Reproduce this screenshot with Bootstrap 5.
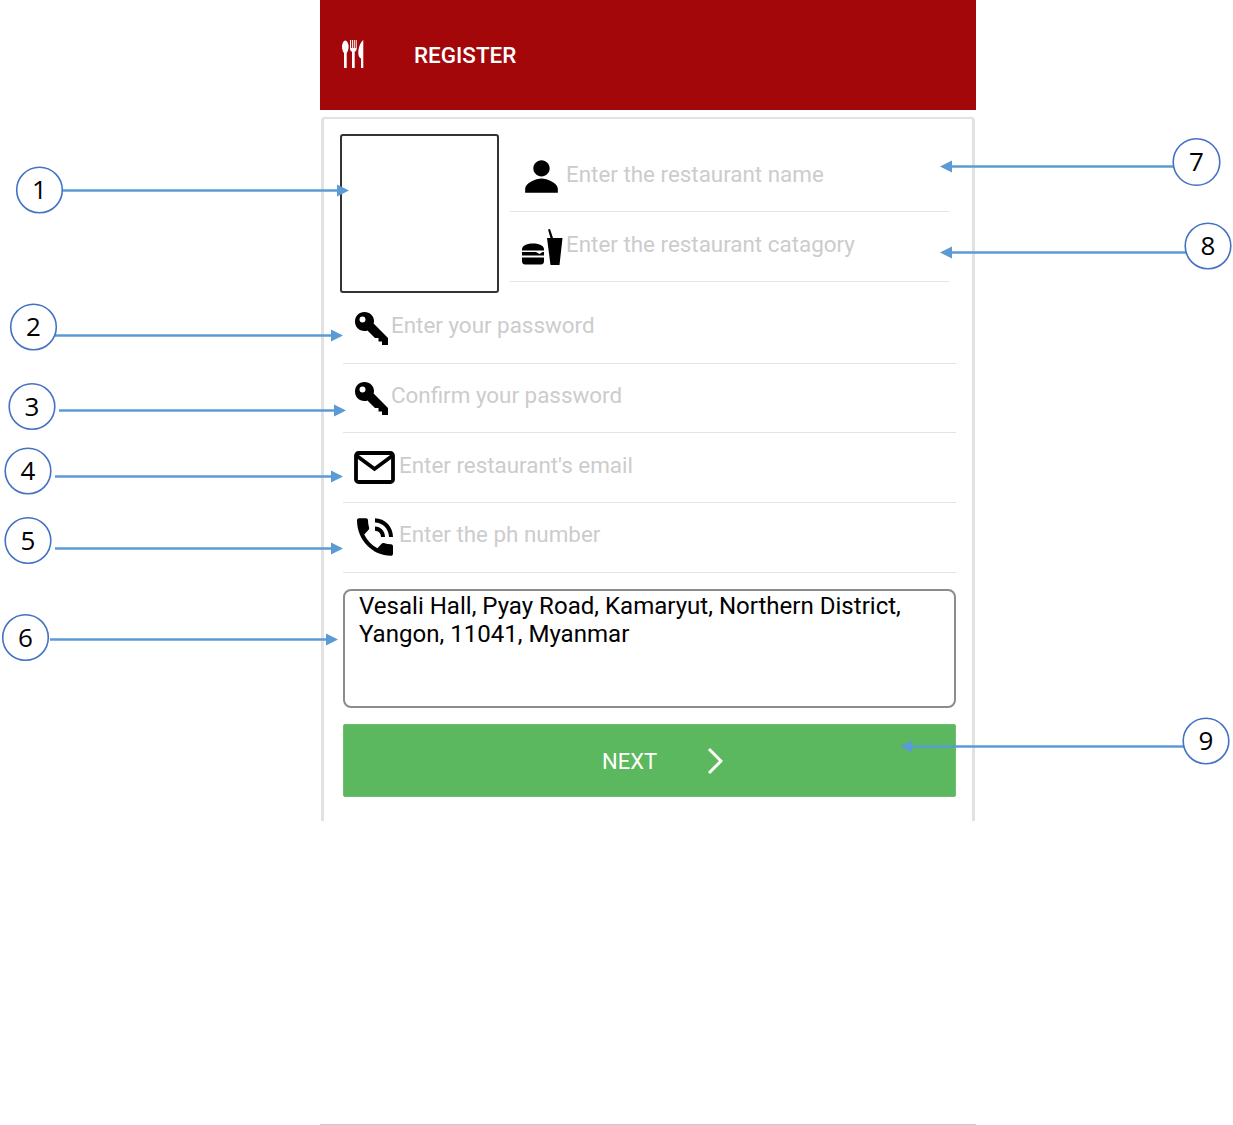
<!DOCTYPE html>
<html lang="en">
<head>
  <meta charset="UTF-8">
  <meta name="viewport" content="width=device-width, initial-scale=1.0">
  <title>Register</title>
  <link href="https://cdn.jsdelivr.net/npm/bootstrap@5.3.7/dist/css/bootstrap.min.css" rel="stylesheet">
  <script src="https://cdn.jsdelivr.net/npm/bootstrap@5.3.7/dist/js/bootstrap.bundle.min.js"></script>
  <style>
    body { background: #fff; font-family: Roboto, "Liberation Sans", sans-serif; }
    .page-canvas { width: 1233px; height: 1125px; overflow: hidden; }
    .phone-frame { width: 656px; height: 1125px; margin-left: 320px; border-bottom: 1px solid #ccc; }
    .app-bar { height: 110px; background: #a30709; color: #fff; padding-left: 21px; }
    .bar-icon { margin-bottom: 3px; }
    .app-bar-title { font-size: 22.4px; font-weight: 500; margin: 2px 0 0 50px; }
    .form-panel { margin: 7px 1px 0; height: 704px; border: 3px solid #e2e2e2; border-bottom: 0; border-top-width: 2px; border-radius: 4px 4px 0 0; padding: 15px 17px 0 16px; }
    .photo-box { width: 159px; height: 159px; border: 2px solid #333; border-radius: 3px; flex: none; }
    .top-fields { width: 439px; margin-left: 11px; }
    .field-row { height: 70px; border-bottom: 1px solid #e4e4e4; }
    .name-row { height: 78px; }
    .wide-row { margin-left: 3px; width: 613px; height: 69.7px; padding-left: 11px; }
    .first-wide { margin-top: 1px; }
    .field-input.form-control { border: 0; padding: 0; border-radius: 0; font-size: 22.4px; line-height: 28px; margin-bottom: 6px; box-shadow: none; background: transparent; }
    .name-row .field-input.form-control { margin-bottom: 0; margin-top: 2px; }
    .field-input::placeholder { color: #ccc; opacity: 1; }
    .name-icon { width: 49px; height: 49px; margin: 7px 0 0 7px; flex: none; }
    .cat-icon { width: 42px; height: 38px; margin: 0 3px 0 11px; flex: none; }
    .key-icon { width: 34px; height: 35px; margin: 0 3px 0 0; flex: none; }
    .mail-icon { width: 41px; height: 33px; margin: 0 4px 0 0; flex: none; }
    .call-icon { width: 48px; height: 50px; margin: 0 0 0 -3px; flex: none; }
    .address-box.form-control { display: block; margin: 16px 0 0 3px; width: 613px; height: 119px; resize: none; border: 2px solid #8c8c8c; border-radius: 8px; color: #000; font-size: 24.05px; line-height: 28px; padding: 1px 14px; box-shadow: none; overflow: hidden; }
    .next-btn.btn { margin: 16px 0 0 3px; width: 613px; height: 73px; background: #5cb85e; border: 1px solid #6dbd6f; border-radius: 2px; color: #fff; font-size: 22px; padding: 2px 0 0 26px; gap: 50px; }
    .next-btn svg { width: 16px; height: 28px; }
    .callouts { position: absolute; left: 0; top: 0; width: 1233px; height: 1125px; pointer-events: none; }
    .callouts text { font-family: "Open Sans", sans-serif; font-size: 26px; fill: #000; text-anchor: middle; }
    .callouts circle { fill: #fff; stroke: #4472c4; stroke-width: 1.6; }
    .callouts line { stroke: #5b9bd5; stroke-width: 2.5; }
    .callouts polygon { fill: #5b9bd5; }
  </style>
</head>
<body class="m-0">
<div class="page-canvas position-relative">
  <div class="phone-frame">
    <div class="app-bar d-flex align-items-center">
      <svg class="bar-icon" width="23" height="30" viewBox="0 0 23 30" fill="#fff" aria-hidden="true">
        <ellipse cx="4.300" cy="8" rx="3.300" ry="6.500"/><rect x="3" y="12" width="2.700" height="17"/>
        <path d="M9 1h1v8h.9V1h1v8h.9V1h1v8h.900V1h1v8.500c0 1.800-.8 2.800-2 3.300V29H11V12.800c-1.200-.5-2-1.500-2-3.300z"/>
        <path d="M22.300 1c-3 2-5 8-5 13 0 3 1 4.500 2.700 5.500V29h2.300z"/>
      </svg>
      <span class="app-bar-title">REGISTER</span>
    </div>
    <form class="form-panel">
      <div class="d-flex">
        <div class="photo-box"></div>
        <div class="top-fields">
          <div class="field-row name-row d-flex align-items-center">
            <svg class="name-icon" viewBox="0 0 24 24" aria-hidden="true"><path d="M12 12c2.210 0 4-1.790 4-4s-1.790-4-4-4-4 1.790-4 4 1.790 4 4 4zm0 1c-2.670 0-8 2.340-8 5v2h16v-2c0-2.660-5.330-5-8-5z"/></svg>
            <input type="text" class="form-control field-input" placeholder="Enter the restaurant name">
          </div>
          <div class="field-row d-flex align-items-center">
            <svg class="cat-icon" viewBox="0 0 42 38" aria-hidden="true">
              <path d="M1 21.500c0-3.500 4-6 11-6s11 2.500 11 6v1H1z"/>
              <path d="M1 24h14l3.500 2 3-2H23v3.500H1z"/>
              <path d="M1 29.500h22v3.500c0 2-1 3.500-3 3.500H4c-2 0-3-1.500-3-3.500z"/>
              <path d="M26 10h3.500L27 1.500l2-.6L32 10h9.500l-3 27h-9z"/>
            </svg>
            <input type="text" class="form-control field-input" placeholder="Enter the restaurant catagory">
          </div>
        </div>
      </div>
      <div class="field-row wide-row first-wide d-flex align-items-center">
        <svg class="key-icon" viewBox="0 0 34 35" aria-hidden="true"><path fill-rule="evenodd" d="M10.500 1C16 1 20 5 20 10c0 1-.1 1.800-.4 2.600L34 27v7h-6v-3.500h-3.500V27h-3.500L13.500 19.500c-1 .4-2 .5-3 .5C5 20 1 16 1 10.500S5 1 10.500 1zM8.500 5.500a3 3 0 1 0 0 6 3 3 0 0 0 0-6z"/></svg>
        <input type="password" class="form-control field-input" placeholder="Enter your password">
      </div>
      <div class="field-row wide-row d-flex align-items-center">
        <svg class="key-icon" viewBox="0 0 34 35" aria-hidden="true"><path fill-rule="evenodd" d="M10.500 1C16 1 20 5 20 10c0 1-.1 1.800-.4 2.600L34 27v7h-6v-3.500h-3.500V27h-3.500L13.500 19.500c-1 .4-2 .5-3 .5C5 20 1 16 1 10.500S5 1 10.500 1zM8.500 5.500a3 3 0 1 0 0 6 3 3 0 0 0 0-6z"/></svg>
        <input type="password" class="form-control field-input" placeholder="Confirm your password">
      </div>
      <div class="field-row wide-row d-flex align-items-center">
        <svg class="mail-icon" viewBox="0 0 41 33" fill="none" stroke="#000" aria-hidden="true"><rect x="2" y="2" width="37" height="29" rx="2.500" stroke-width="3.800"/><path d="M3 5l17.500 13L38 5" stroke-width="3.800"/></svg>
        <input type="email" class="form-control field-input" placeholder="Enter restaurant's email">
      </div>
      <div class="field-row wide-row d-flex align-items-center">
        <svg class="call-icon" viewBox="0 0 24 24" preserveAspectRatio="none" aria-hidden="true"><path d="M20 15.500c-1.250 0-2.450-.2-3.570-.57-.35-.11-.74-.03-1.020.24l-2.200 2.200c-2.830-1.440-5.150-3.750-6.590-6.590l2.200-2.210c.28-.26.36-.65.25-1C8.700 6.450 8.500 5.250 8.500 4c0-.55-.45-1-1-1H4c-.55 0-1 .45-1 1 0 9.390 7.610 17 17 17 .55 0 1-.45 1-1v-3.500c0-.55-.45-1-1-1zM19 12h2c0-4.970-4.030-9-9-9v2c3.870 0 7 3.130 7 7zm-4 0h2c0-2.760-2.240-5-5-5v2c1.660 0 3 1.340 3 3z"/></svg>
        <input type="tel" class="form-control field-input" placeholder="Enter the ph number">
      </div>
      <textarea class="form-control address-box">Vesali Hall, Pyay Road, Kamaryut, Northern District, Yangon, 11041, Myanmar</textarea>
      <button type="button" class="btn next-btn d-flex align-items-center justify-content-center">
        NEXT
        <svg viewBox="0 0 16 28" fill="none" stroke="#fff" stroke-width="3" aria-hidden="true"><path d="M2 2l12 12L2 26"/></svg>
      </button>
    </form>
  </div>

  <svg class="callouts" viewBox="0 0 1233 1125" aria-hidden="true">
    <line x1="62" y1="190.500" x2="340" y2="190.500"/><polygon points="337,184.500 349,190.500 337,196.500"/>
    <line x1="55" y1="335.500" x2="334" y2="335.500"/><polygon points="331,329.500 343,335.500 331,341.500"/>
    <line x1="59" y1="410.500" x2="337" y2="410.500"/><polygon points="334,404.500 346,410.500 334,416.500"/>
    <line x1="55" y1="476.500" x2="334" y2="476.500"/><polygon points="331,470.500 343,476.500 331,482.500"/>
    <line x1="55" y1="548.500" x2="334" y2="548.500"/><polygon points="331,542.500 343,548.500 331,554.500"/>
    <line x1="50" y1="639.500" x2="329" y2="639.500"/><polygon points="326,633.500 338,639.500 326,645.500"/>
    <line x1="1174" y1="166.500" x2="949" y2="166.500"/><polygon points="952,160.500 940,166.500 952,172.500"/>
    <line x1="1186" y1="252.500" x2="949" y2="252.500"/><polygon points="952,246.500 940,252.500 952,258.500"/>
    <line x1="1184" y1="746.500" x2="909" y2="746.500"/><polygon points="912,740.500 900,746.500 912,752.500"/>
    <circle cx="39.500" cy="190" r="22.800"/><text x="39.500" y="199">1</text>
    <circle cx="33.500" cy="327" r="22.800"/><text x="33.500" y="336">2</text>
    <circle cx="32" cy="406.500" r="22.800"/><text x="32" y="416">3</text>
    <circle cx="28" cy="471" r="22.800"/><text x="28" y="480">4</text>
    <circle cx="28" cy="540.500" r="22.800"/><text x="28" y="550">5</text>
    <circle cx="25.500" cy="637.500" r="22.800"/><text x="25.500" y="647">6</text>
    <circle cx="1196.500" cy="162" r="23.300"/><text x="1196.500" y="171">7</text>
    <circle cx="1208" cy="246" r="22.800"/><text x="1208" y="255">8</text>
    <circle cx="1206" cy="741" r="22.800"/><text x="1206" y="750">9</text>
  </svg>
</div>
</body>
</html>
